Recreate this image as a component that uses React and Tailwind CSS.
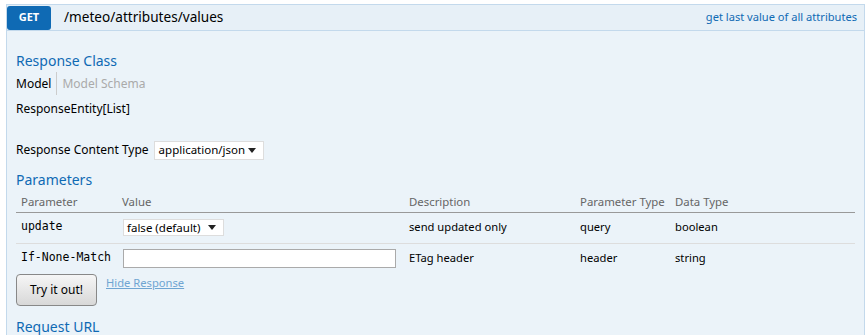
import React from "react";

const font = { fontFamily: '"Noto Sans", "Open Sans", sans-serif' };
const mono = { fontFamily: '"DejaVu Sans Mono", monospace' };

function Arrow() {
  return (
    <svg width="8" height="5" viewBox="0 0 8 5" className="shrink-0">
      <path d="M0 0 L8 0 L4 5 Z" fill="#222" />
    </svg>
  );
}

export default function App() {
  return (
    <div className="bg-white w-[867px] h-[335px] overflow-hidden pt-[4px] pl-[6px]" style={font}>
      <div className="w-[859px]">
        {/* heading */}
        <div className="h-[27px] bg-[#e7f0f7] border border-[#c3d9ec] flex items-center">
          <div className="w-[44px] h-[24px] bg-[#0f6ab4] rounded-[3px] flex items-center justify-center text-white text-[11px] font-bold">
            GET
          </div>
          <div className="ml-[13px] text-[13.6px] text-black">/meteo/attributes/values</div>
          <div className="ml-auto mr-[7px] text-[11.1px] text-[#0f6ab4]">get last value of all attributes</div>
        </div>
        {/* content */}
        <div className="h-[320px] bg-[#ebf3f9] border-l border-r border-[#c3d9ec] pl-[9px] pr-[8px] pt-[21px] text-[12px] text-black">
          <div className="text-[14px] leading-[18px] text-[#0f6ab4]">Response Class</div>
          <div className="mt-[2px] h-[23px] flex items-stretch">
            <div className="flex items-center pr-[5px] text-[12px] text-black">Model</div>
            <div className="flex items-center pl-[5px] border-l border-[#ccc] text-[12px] text-[#aaa]">Model Schema</div>
          </div>
          <div className="mt-[5px] leading-[18px]">ResponseEntity[List]</div>
          <div className="mt-[22px] h-[20px] flex items-center">
            <span>Response Content Type</span>
            <div className="ml-[5px] w-[110px] h-[19px] bg-white border border-[#ddd] flex items-center pl-[4px] pr-[7px] text-[11.5px]">
              <span className="flex-1">application/json</span>
              <Arrow />
            </div>
          </div>
          <div className="mt-[11px] text-[14px] leading-[18px] text-[#0f6ab4]">Parameters</div>
          <div className="w-[839px]">
            <div className="grid grid-cols-[101px_287px_171px_95px_1fr] pt-[4px] pb-[2px] border-b border-[#999] text-[#666] text-[11.4px] leading-[17px]">
              <div className="pl-[5px]">Parameter</div>
              <div className="pl-[5px]">Value</div>
              <div className="pl-[5px]">Description</div>
              <div className="pl-[5px]">Parameter Type</div>
              <div className="pl-[5px]">Data Type</div>
            </div>
            <div className="grid grid-cols-[101px_287px_171px_95px_1fr] pt-[5px] h-[31px] border-b border-[#ddd] text-[11.2px] leading-[17px]">
              <div className="pl-[5px] text-[11.5px]" style={mono}>update</div>
              <div className="pl-[6px]">
                <div className="mt-[1px] w-[101px] h-[17px] bg-white border border-[#ddd] flex items-center pl-[3px] pr-[7px] text-[11.5px]">
                  <span className="flex-1">false (default)</span>
                  <Arrow />
                </div>
              </div>
              <div className="pl-[5px]">send updated only</div>
              <div className="pl-[5px]">query</div>
              <div className="pl-[5px]">boolean</div>
            </div>
            <div className="grid grid-cols-[101px_287px_171px_95px_1fr] pt-[5px] pb-[6px] text-[11.2px] leading-[17px]">
              <div className="pl-[5px] text-[11.5px]" style={mono}>If-None-Match</div>
              <div className="pl-[6px]">
                <div className="w-[273px] h-[19px] bg-white border border-[#aaa]" />
              </div>
              <div className="pl-[5px]">ETag header</div>
              <div className="pl-[5px]">header</div>
              <div className="pl-[5px]">string</div>
            </div>
          </div>
          <div className="flex items-start">
            <button className="w-[81px] h-[32px] rounded-[4px] border border-[#888] bg-gradient-to-b from-[#f6f6f6] to-[#d8d8d8] text-[12px] text-black">
              Try it out!
            </button>
            <a className="ml-[9px] leading-[17px] text-[11.2px] text-[#6fa5d2] underline">Hide Response</a>
          </div>
          <div className="mt-[12px] text-[14px] leading-[18px] text-[#0f6ab4]">Request URL</div>
        </div>
      </div>
    </div>
  );
}
